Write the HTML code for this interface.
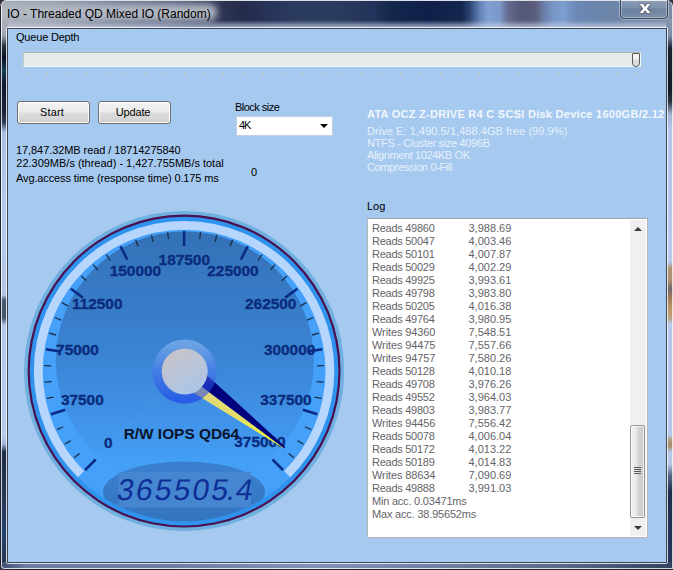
<!DOCTYPE html>
<html lang="en"><head><meta charset="utf-8"><title>IO - Threaded QD Mixed IO (Random)</title>
<style>
html,body{margin:0;padding:0}
body{width:673px;height:570px;overflow:hidden;position:relative;background:#3c343c;font-family:"Liberation Sans",sans-serif;font-size:11px;color:#000}
.abs{position:absolute}
#win{position:absolute;left:0;top:0;width:673px;height:570px;overflow:hidden;border-radius:7px 7px 0 5px;
 background:#6d7d99}
#tbar{position:absolute;left:0;top:0;width:673px;height:29px;
 background:linear-gradient(90deg,#a2a8b4 0px,#9aa2b0 40px,#868ea4 80px,#6a748f 120px,#566080 170px,#3e4868 200px,#2c3252 225px,#252b4b 245px,#27345a 270px,#2c3c60 300px,#2b3b5e 340px,#22325a 375px,#14264c 392px,#10204a 430px,#15274e 462px,#2e4674 470px,#6484b8 480px,#80a0d2 488px,#7c98c8 500px,#646c90 508px,#565878 520px,#5a5c7a 535px,#6c82ac 545px,#7896c6 553px,#7d9fd0 563px,#6c88b4 577px,#6a84aa 600px,#7489a8 640px,#7a8ca6 673px)}
#tglow{position:absolute;left:2px;top:10px;width:209px;height:5px;border-radius:4px;background:#b3b9c3;box-shadow:0 0 7px 6px #b3b9c3;opacity:.97}
#tshadeL{position:absolute;left:0;top:0;width:673px;height:29px;background:linear-gradient(180deg,rgba(200,207,224,0) 0,rgba(200,207,224,0) 21px,rgba(200,207,224,.35) 24px,rgba(200,207,224,.75) 27px);-webkit-mask-image:linear-gradient(90deg,#000 0,#000 150px,transparent 225px);mask-image:linear-gradient(90deg,#000 0,#000 150px,transparent 225px)}
#tshadeR{position:absolute;left:0;top:0;width:673px;height:29px;background:linear-gradient(180deg,rgba(195,206,228,0) 0,rgba(195,206,228,0) 20px,rgba(195,206,228,.25) 22.5px,rgba(195,206,228,.5) 24.5px,rgba(195,206,228,.7) 26.5px,rgba(195,206,228,.75) 27px);-webkit-mask-image:linear-gradient(90deg,transparent 0,transparent 150px,#000 225px);mask-image:linear-gradient(90deg,transparent 0,transparent 150px,#000 225px)}
#ttop{position:absolute;left:0;top:0;width:673px;height:1px;background:#d0d4dc}
#ttext{position:absolute;left:7px;top:7px;font-size:12px;line-height:14px;color:#000;white-space:pre;letter-spacing:-0.005px}
#fl{position:absolute;left:0;top:20px;width:8px;height:550px;
 background:linear-gradient(180deg,#a6adb9 0px,#a6adb9 10px,#9aa2b0 16px,#2a3040 26px,#0c1424 38px,#163e58 50px,#101a30 64px,#1a2438 92px,#2e3a52 102px,#a9bfe2 112px,#b4c9ea 180px,#b2c6e6 275px,#4a5870 280px,#47556d 298px,#b2c8ea 305px,#b6cbea 416px,#9fb4d8 424px,#1e2a46 432px,#2a3856 480px,#22416e 515px,#2a3654 540px)}
#fr{position:absolute;left:666px;top:19px;width:7px;height:551px;
 background:linear-gradient(180deg,#8796ae 0px,#7d8ca6 17px,#1a2133 29px,#10182a 71px,#2b3345 83px,#9fb2d2 95px,#b3c8ea 111px,#b5caec 243px,#b09478 249px,#b09070 261px,#706870 270px,#a07c58 279px,#c09a68 291px,#b8a080 299px,#b5c9ea 305px,#b4c9eb 416px,#b09a80 421px,#a58a6c 427px,#b4c8e8 433px,#b4c8e8 445px,#5a6a88 456px,#1f2d4c 473px,#24355a 541px)}
#fb{position:absolute;left:0;top:562px;width:673px;height:8px;background:linear-gradient(90deg,#3a4a6a 0,#6a7ca0 25px,#6c7c9e 160px,#8292b4 310px,#7383a5 420px,#5a6a8a 560px,#34425f 673px)}
.edge{position:absolute;box-sizing:border-box}
#client{position:absolute;left:8px;top:29px;width:658px;height:533px;background:#a6c9ef;overflow:hidden}
#gauge{position:absolute;left:0;top:0}
.lbl{position:absolute;white-space:pre;line-height:13px}
.btn{position:absolute;box-sizing:border-box;width:73px;height:23px;border:1px solid #707070;border-radius:3px;
 background:linear-gradient(180deg,#f2f2f2 0,#ebebeb 48%,#dddddd 52%,#cfcfcf 100%);box-shadow:inset 0 0 0 1px rgba(255,255,255,.85);
 text-align:center;line-height:20px;font-size:11px;color:#000;padding-right:3px}
#combo{position:absolute;left:236px;top:116px;width:97px;height:20px;box-sizing:border-box;background:#fff;border:1px solid #c3cfe2}
#list{position:absolute;left:367px;top:218px;width:281px;height:320px;box-sizing:border-box;background:#fff;border:1px solid #b9b4ae;border-top-color:#a2a4a8;border-left-color:#b4b6ba}
.lr{position:absolute;left:4px;height:13px;line-height:13px;white-space:pre;color:#646468}
.c1{position:absolute;left:0;letter-spacing:-0.268px}
.c2{position:absolute;left:96.5px;letter-spacing:-0.004px}
#sb{position:absolute;left:630px;top:220px;width:16px;height:316px;background:#f0f0f0}
#thumb{position:absolute;left:630px;top:425px;width:15px;height:93px;box-sizing:border-box;border:1px solid #979797;border-radius:2px;
 background:linear-gradient(90deg,#f3f3f3 0,#e6e6e6 45%,#d4d4d4 55%,#c9c9c9 100%);box-shadow:inset 0 0 0 1px rgba(255,255,255,.7)}
.grip{position:absolute;left:634px;width:7px;height:1px;background:#5a5a5a}
.tri{position:absolute;width:0;height:0;border-left:4px solid transparent;border-right:4px solid transparent}
.gl{font-family:"Liberation Sans",sans-serif;font-weight:bold;font-size:15.4px;fill:#0a2c7c;stroke:#0a2c7c;stroke-width:.35px}
.gt{font-family:"Liberation Sans",sans-serif;font-weight:bold;font-size:15.4px;fill:#08142c}
.dg{font-family:"Liberation Sans",sans-serif;font-size:30px;fill:#0d2f96}
.info{color:#e6f0fb}
</style></head><body>
<div id="win">
 <div id="tbar"></div><div id="tglow"></div><div id="tshadeL"></div><div id="tshadeR"></div><div id="ttop"></div>
 <div id="fl"></div><div id="fr"></div><div id="fb"></div>
 <!-- outer highlights -->
 <div class="edge" style="left:0;top:0;width:673px;height:570px;border:1px solid #1d2230;border-top-color:transparent;border-right:none;border-radius:7px 7px 0 5px"></div>
 <div class="edge" style="left:1px;top:0px;width:672px;height:569px;border:1px solid rgba(255,255,255,.78);border-top-color:rgba(255,255,255,.25);border-radius:6px 6px 0 4px"></div>
 <!-- close button -->
 <div class="edge" style="left:620px;top:-1px;width:48px;height:20px;border:1px solid #3f4a5c;border-radius:0 0 4px 4px;background:linear-gradient(180deg,rgba(255,255,255,.18),rgba(255,255,255,.05) 45%,rgba(0,0,0,.06) 50%,rgba(255,255,255,.06));box-shadow:0 0 0 1px rgba(255,255,255,.35),inset 0 0 0 1px rgba(255,255,255,.3)"></div>
 <div class="abs" style="left:636.5px;top:-1.8px;width:16px;height:20px;text-align:center;font-family:'DejaVu Sans','Liberation Sans',sans-serif;font-weight:bold;font-size:15px;line-height:20px;color:#fff;text-shadow:0 0 1px #333,0 0 2px #444;transform:scaleX(1.2)">x</div>
 <div id="ttext">IO - Threaded QD Mixed IO (Random)</div>
 <!-- inner frame lines -->
 <div class="edge" style="left:6px;top:27px;width:662px;height:537px;border:1px solid rgba(255,255,255,.8);border-radius:2px"></div>
 <div class="edge" style="left:7px;top:28px;width:660px;height:535px;border:1px solid #3c4456"></div>
 <div id="client"></div>
</div>
<svg id="gauge" width="673" height="570" viewBox="0 0 673 570">
<defs>
<linearGradient id="lens" x1="0" y1="0" x2="0" y2="1">
 <stop offset="0" stop-color="#3471b6"/><stop offset="0.45" stop-color="#3a82d2"/><stop offset="0.72" stop-color="#4092e8"/><stop offset="0.9" stop-color="#449ff6"/><stop offset="1" stop-color="#44a0f8"/>
</linearGradient>
<linearGradient id="ring" x1="0" y1="0" x2="0" y2="1">
 <stop offset="0" stop-color="#94bef4"/><stop offset="0.5" stop-color="#4a74ec"/><stop offset="1" stop-color="#1636e8"/>
</linearGradient>
<linearGradient id="hub" x1="0.2" y1="0" x2="0.8" y2="1">
 <stop offset="0" stop-color="#c9c4c7"/><stop offset="1" stop-color="#a9c5ea"/>
</linearGradient>
<linearGradient id="yel" gradientUnits="userSpaceOnUse" x1="184.5" y1="371.5" x2="285" y2="448.6">
 <stop offset="0" stop-color="#dcd484"/><stop offset="0.55" stop-color="#e6de66"/><stop offset="1" stop-color="#ffff20"/>
</linearGradient>
<linearGradient id="ell" x1="0" y1="0" x2="0" y2="1">
 <stop offset="0" stop-color="#3b80d0"/><stop offset="1" stop-color="#3374be"/>
</linearGradient>
<clipPath id="face"><circle cx="184.1" cy="371.1" r="150.2"/></clipPath>
</defs>
<circle cx="184.1" cy="371.1" r="160.1" fill="#6fb0e0"/>
<circle cx="184.1" cy="371.1" r="156.5" fill="#4a0f4e"/>
<circle cx="184.1" cy="371.1" r="154.3" fill="#2f92ec"/>
<circle cx="184.1" cy="371.1" r="150.2" fill="#44a0f8"/>
<path d="M81.00,474.20 A145.8,145.8 0 1 1 287.20,474.20" fill="none" stroke="#b6d6fe" stroke-width="8.8"/>
<circle cx="184.8" cy="360.5" r="129" fill="url(#lens)"/>
<g clip-path="url(#face)"><ellipse cx="184" cy="492" rx="81" ry="30.5" fill="url(#ell)"/></g>
<rect x="118.5" y="472" width="132.5" height="35.5" fill="#4686d0"/>
<line x1="184.1" y1="371.1" x2="97.83" y2="457.37" stroke="#8fc4ff" stroke-opacity="0.14" stroke-width="1"/>
<line x1="95.71" y1="459.49" x2="85.11" y2="470.09" stroke="#0b2a86" stroke-width="2.6"/>
<line x1="79.65" y1="453.44" x2="74.16" y2="457.77" stroke="#1b2f48" stroke-width="1.3"/>
<line x1="70.70" y1="440.59" x2="64.73" y2="444.25" stroke="#1b2f48" stroke-width="1.3"/>
<line x1="63.32" y1="426.78" x2="56.96" y2="429.71" stroke="#1b2f48" stroke-width="1.3"/>
<line x1="65.22" y1="409.73" x2="50.95" y2="414.36" stroke="#0b2a86" stroke-width="2.6"/>
<line x1="53.66" y1="397.05" x2="46.79" y2="398.41" stroke="#1b2f48" stroke-width="1.3"/>
<line x1="51.51" y1="381.54" x2="44.53" y2="382.08" stroke="#1b2f48" stroke-width="1.3"/>
<line x1="51.20" y1="365.88" x2="44.21" y2="365.60" stroke="#1b2f48" stroke-width="1.3"/>
<line x1="60.64" y1="351.55" x2="45.82" y2="349.20" stroke="#0b2a86" stroke-width="2.6"/>
<line x1="56.09" y1="335.00" x2="49.36" y2="333.10" stroke="#1b2f48" stroke-width="1.3"/>
<line x1="61.22" y1="320.20" x2="54.76" y2="317.52" stroke="#1b2f48" stroke-width="1.3"/>
<line x1="68.06" y1="306.11" x2="61.95" y2="302.69" stroke="#1b2f48" stroke-width="1.3"/>
<line x1="82.97" y1="297.63" x2="70.84" y2="288.81" stroke="#0b2a86" stroke-width="2.6"/>
<line x1="86.44" y1="280.82" x2="81.29" y2="276.07" stroke="#1b2f48" stroke-width="1.3"/>
<line x1="97.72" y1="269.97" x2="93.18" y2="264.64" stroke="#1b2f48" stroke-width="1.3"/>
<line x1="110.21" y1="260.51" x2="106.32" y2="254.69" stroke="#1b2f48" stroke-width="1.3"/>
<line x1="127.35" y1="259.72" x2="120.54" y2="246.36" stroke="#0b2a86" stroke-width="2.6"/>
<line x1="138.07" y1="246.32" x2="135.64" y2="239.75" stroke="#1b2f48" stroke-width="1.3"/>
<line x1="153.05" y1="241.77" x2="151.42" y2="234.97" stroke="#1b2f48" stroke-width="1.3"/>
<line x1="168.47" y1="239.02" x2="167.64" y2="232.07" stroke="#1b2f48" stroke-width="1.3"/>
<line x1="184.10" y1="246.10" x2="184.10" y2="231.10" stroke="#0b2a86" stroke-width="2.6"/>
<line x1="199.73" y1="239.02" x2="200.56" y2="232.07" stroke="#1b2f48" stroke-width="1.3"/>
<line x1="215.15" y1="241.77" x2="216.78" y2="234.97" stroke="#1b2f48" stroke-width="1.3"/>
<line x1="230.13" y1="246.32" x2="232.56" y2="239.75" stroke="#1b2f48" stroke-width="1.3"/>
<line x1="240.85" y1="259.72" x2="247.66" y2="246.36" stroke="#0b2a86" stroke-width="2.6"/>
<line x1="257.99" y1="260.51" x2="261.88" y2="254.69" stroke="#1b2f48" stroke-width="1.3"/>
<line x1="270.48" y1="269.97" x2="275.02" y2="264.64" stroke="#1b2f48" stroke-width="1.3"/>
<line x1="281.76" y1="280.82" x2="286.91" y2="276.07" stroke="#1b2f48" stroke-width="1.3"/>
<line x1="285.23" y1="297.63" x2="297.36" y2="288.81" stroke="#0b2a86" stroke-width="2.6"/>
<line x1="300.14" y1="306.11" x2="306.25" y2="302.69" stroke="#1b2f48" stroke-width="1.3"/>
<line x1="306.98" y1="320.20" x2="313.44" y2="317.52" stroke="#1b2f48" stroke-width="1.3"/>
<line x1="312.11" y1="335.00" x2="318.84" y2="333.10" stroke="#1b2f48" stroke-width="1.3"/>
<line x1="307.56" y1="351.55" x2="322.38" y2="349.20" stroke="#0b2a86" stroke-width="2.6"/>
<line x1="317.00" y1="365.88" x2="323.99" y2="365.60" stroke="#1b2f48" stroke-width="1.3"/>
<line x1="316.69" y1="381.54" x2="323.67" y2="382.08" stroke="#1b2f48" stroke-width="1.3"/>
<line x1="314.54" y1="397.05" x2="321.41" y2="398.41" stroke="#1b2f48" stroke-width="1.3"/>
<line x1="302.98" y1="409.73" x2="317.25" y2="414.36" stroke="#0b2a86" stroke-width="2.6"/>
<line x1="304.88" y1="426.78" x2="311.24" y2="429.71" stroke="#1b2f48" stroke-width="1.3"/>
<line x1="297.50" y1="440.59" x2="303.47" y2="444.25" stroke="#1b2f48" stroke-width="1.3"/>
<line x1="288.55" y1="453.44" x2="294.04" y2="457.77" stroke="#1b2f48" stroke-width="1.3"/>
<line x1="272.49" y1="459.49" x2="283.09" y2="470.09" stroke="#0b2a86" stroke-width="2.6"/>
<text x="108.4" y="447.5" text-anchor="middle" class="gl">0</text>
<text x="82.3" y="405.4" text-anchor="middle" class="gl">37500</text>
<text x="77.5" y="355.2" text-anchor="middle" class="gl">75000</text>
<text x="97.2" y="308.7" text-anchor="middle" class="gl">112500</text>
<text x="135.4" y="276.2" text-anchor="middle" class="gl">150000</text>
<text x="184.3" y="264.6" text-anchor="middle" class="gl">187500</text>
<text x="233.0" y="276.2" text-anchor="middle" class="gl">225000</text>
<text x="270.7" y="309.3" text-anchor="middle" class="gl">262500</text>
<text x="289.6" y="355.4" text-anchor="middle" class="gl">300000</text>
<text x="286.0" y="405.4" text-anchor="middle" class="gl">337500</text>
<text x="260.0" y="447.4" text-anchor="middle" class="gl">375000</text>
<text x="181.4" y="439.4" text-anchor="middle" class="gt">R/W IOPS QD64</text>
<polygon points="190,359.8 284.9,446.5 284.6,448.8 186,375.1" fill="#00007c"/>
<polygon points="186,375.1 284.6,448.8 283,448 180,384.4" fill="url(#yel)"/>
<circle cx="184.6" cy="371.6" r="27.5" fill="none" stroke="url(#ring)" stroke-width="9.2" stroke-opacity="0.55"/>
<circle cx="184.7" cy="371.4" r="23" fill="url(#hub)"/>
<text transform="translate(115.8,499.5) skewX(-10) scale(1.0,1)" x="0.00 18.80 37.60 56.40 75.30 94.10 109.70 118.60" y="0" class="dg">365505.4</text>
</svg>
<!-- labels -->
<div class="lbl" style="left:16px;top:31px;letter-spacing:-0.195px">Queue Depth</div>
<div class="abs" style="left:23px;top:52px;width:618px;height:15px;box-sizing:border-box;background:#e7eaea;border:1px solid #f3f5f6;border-top-color:#b4b6b6;border-left-color:#c9cbcb"></div>
<div class="abs" style="left:27px;top:72px;width:1px;height:3px;background:#c2c4c0"></div><div class="abs" style="left:47px;top:72px;width:1px;height:3px;background:#c2c4c0"></div><div class="abs" style="left:66px;top:72px;width:1px;height:3px;background:#c2c4c0"></div><div class="abs" style="left:86px;top:72px;width:1px;height:3px;background:#c2c4c0"></div><div class="abs" style="left:106px;top:72px;width:1px;height:3px;background:#c2c4c0"></div><div class="abs" style="left:125px;top:72px;width:1px;height:3px;background:#c2c4c0"></div><div class="abs" style="left:145px;top:72px;width:1px;height:3px;background:#c2c4c0"></div><div class="abs" style="left:165px;top:72px;width:1px;height:3px;background:#c2c4c0"></div><div class="abs" style="left:184px;top:72px;width:1px;height:3px;background:#c2c4c0"></div><div class="abs" style="left:204px;top:72px;width:1px;height:3px;background:#c2c4c0"></div><div class="abs" style="left:223px;top:72px;width:1px;height:3px;background:#c2c4c0"></div><div class="abs" style="left:243px;top:72px;width:1px;height:3px;background:#c2c4c0"></div><div class="abs" style="left:263px;top:72px;width:1px;height:3px;background:#c2c4c0"></div><div class="abs" style="left:282px;top:72px;width:1px;height:3px;background:#c2c4c0"></div><div class="abs" style="left:302px;top:72px;width:1px;height:3px;background:#c2c4c0"></div><div class="abs" style="left:322px;top:72px;width:1px;height:3px;background:#c2c4c0"></div><div class="abs" style="left:341px;top:72px;width:1px;height:3px;background:#c2c4c0"></div><div class="abs" style="left:361px;top:72px;width:1px;height:3px;background:#c2c4c0"></div><div class="abs" style="left:381px;top:72px;width:1px;height:3px;background:#c2c4c0"></div><div class="abs" style="left:400px;top:72px;width:1px;height:3px;background:#c2c4c0"></div><div class="abs" style="left:420px;top:72px;width:1px;height:3px;background:#c2c4c0"></div><div class="abs" style="left:440px;top:72px;width:1px;height:3px;background:#c2c4c0"></div><div class="abs" style="left:459px;top:72px;width:1px;height:3px;background:#c2c4c0"></div><div class="abs" style="left:479px;top:72px;width:1px;height:3px;background:#c2c4c0"></div><div class="abs" style="left:499px;top:72px;width:1px;height:3px;background:#c2c4c0"></div><div class="abs" style="left:518px;top:72px;width:1px;height:3px;background:#c2c4c0"></div><div class="abs" style="left:538px;top:72px;width:1px;height:3px;background:#c2c4c0"></div><div class="abs" style="left:558px;top:72px;width:1px;height:3px;background:#c2c4c0"></div><div class="abs" style="left:577px;top:72px;width:1px;height:3px;background:#c2c4c0"></div><div class="abs" style="left:597px;top:72px;width:1px;height:3px;background:#c2c4c0"></div><div class="abs" style="left:617px;top:72px;width:1px;height:3px;background:#c2c4c0"></div><div class="abs" style="left:636px;top:72px;width:1px;height:3px;background:#c2c4c0"></div>
<div class="abs" style="left:632px;top:53px;width:8px;height:14px;box-sizing:border-box;border:1px solid #5a5a5a;border-radius:1px 1px 4px 4px;background:linear-gradient(180deg,#f6f6f6 0,#ededed 50%,#d6d6d6 55%,#e4e4e4 100%)"></div>
<div class="btn" style="left:17px;top:101px"><span style="letter-spacing:0.194px">Start</span></div>
<div class="btn" style="left:98px;top:101px"><span style="letter-spacing:-0.147px">Update</span></div>
<div class="lbl" style="left:235px;top:101px;letter-spacing:-0.523px">Block size</div>
<div id="combo"><span class="abs" style="left:2px;top:2px;line-height:13px;letter-spacing:-1.035px">4K</span></div>
<div class="tri" style="left:320px;top:124px;border-top:4px solid #000"></div>
<div class="lbl" style="left:16px;top:144px;letter-spacing:-0.079px">17,847.32MB read / 18714275840</div>
<div class="lbl" style="left:16.3px;top:157px;letter-spacing:-0.012px">22.309MB/s (thread) - 1,427.755MB/s total</div>
<div class="lbl" style="left:16px;top:172px;letter-spacing:-0.124px">Avg.access time (response time) 0.175 ms</div>
<div class="lbl" style="left:251px;top:166px">0</div>
<div class="lbl info" style="left:367px;top:108px;font-weight:bold;color:#f2f7fd;letter-spacing:0.274px">ATA OCZ Z-DRIVE R4 C SCSI Disk Device 1600GB/2.12</div>
<div class="lbl info" style="left:367px;top:125px;letter-spacing:0.056px">Drive E: 1,490.5/1,488.4GB free (99.9%)</div>
<div class="lbl info" style="left:367px;top:137px;letter-spacing:-0.325px">NTFS - Cluster size 4096B</div>
<div class="lbl info" style="left:367px;top:149px;letter-spacing:-0.388px">Alignment 1024KB OK</div>
<div class="lbl info" style="left:367px;top:161px;letter-spacing:-0.372px">Compression 0-Fill</div>
<div class="lbl" style="left:367px;top:200px">Log</div>
<div id="list">
<div class="lr" style="top:3px"><span class="c1" style="letter-spacing:-0.268px">Reads 49860</span><span class="c2">3,988.69</span></div>
<div class="lr" style="top:16px"><span class="c1" style="letter-spacing:-0.268px">Reads 50047</span><span class="c2">4,003.46</span></div>
<div class="lr" style="top:29px"><span class="c1" style="letter-spacing:-0.268px">Reads 50101</span><span class="c2">4,007.87</span></div>
<div class="lr" style="top:42px"><span class="c1" style="letter-spacing:-0.268px">Reads 50029</span><span class="c2">4,002.29</span></div>
<div class="lr" style="top:55px"><span class="c1" style="letter-spacing:-0.268px">Reads 49925</span><span class="c2">3,993.61</span></div>
<div class="lr" style="top:68px"><span class="c1" style="letter-spacing:-0.268px">Reads 49798</span><span class="c2">3,983.80</span></div>
<div class="lr" style="top:81px"><span class="c1" style="letter-spacing:-0.268px">Reads 50205</span><span class="c2">4,016.38</span></div>
<div class="lr" style="top:94px"><span class="c1" style="letter-spacing:-0.268px">Reads 49764</span><span class="c2">3,980.95</span></div>
<div class="lr" style="top:107px"><span class="c1" style="letter-spacing:-0.11px">Writes 94360</span><span class="c2">7,548.51</span></div>
<div class="lr" style="top:120px"><span class="c1" style="letter-spacing:-0.11px">Writes 94475</span><span class="c2">7,557.66</span></div>
<div class="lr" style="top:133px"><span class="c1" style="letter-spacing:-0.11px">Writes 94757</span><span class="c2">7,580.26</span></div>
<div class="lr" style="top:146px"><span class="c1" style="letter-spacing:-0.268px">Reads 50128</span><span class="c2">4,010.18</span></div>
<div class="lr" style="top:159px"><span class="c1" style="letter-spacing:-0.268px">Reads 49708</span><span class="c2">3,976.26</span></div>
<div class="lr" style="top:172px"><span class="c1" style="letter-spacing:-0.268px">Reads 49552</span><span class="c2">3,964.03</span></div>
<div class="lr" style="top:185px"><span class="c1" style="letter-spacing:-0.268px">Reads 49803</span><span class="c2">3,983.77</span></div>
<div class="lr" style="top:198px"><span class="c1" style="letter-spacing:-0.11px">Writes 94456</span><span class="c2">7,556.42</span></div>
<div class="lr" style="top:211px"><span class="c1" style="letter-spacing:-0.268px">Reads 50078</span><span class="c2">4,006.04</span></div>
<div class="lr" style="top:224px"><span class="c1" style="letter-spacing:-0.268px">Reads 50172</span><span class="c2">4,013.22</span></div>
<div class="lr" style="top:237px"><span class="c1" style="letter-spacing:-0.268px">Reads 50189</span><span class="c2">4,014.83</span></div>
<div class="lr" style="top:250px"><span class="c1" style="letter-spacing:-0.11px">Writes 88634</span><span class="c2">7,090.69</span></div>
<div class="lr" style="top:263px"><span class="c1" style="letter-spacing:-0.268px">Reads 49888</span><span class="c2">3,991.03</span></div>
<div class="lr" style="top:276px"><span class="c1" style="letter-spacing:-0.213px">Min acc. 0.03471ms</span></div>
<div class="lr" style="top:289px"><span class="c1" style="letter-spacing:-0.185px">Max acc. 38.95652ms</span></div>
</div>
<div id="sb"></div>
<div id="thumb"></div>
<div class="grip" style="top:467px"></div><div class="grip" style="top:469px"></div><div class="grip" style="top:471px"></div><div class="grip" style="top:473px"></div>
<div class="tri" style="left:634px;top:227px;border-bottom:4px solid #3a3a3a"></div>
<div class="tri" style="left:634px;top:526px;border-top:4px solid #3a3a3a"></div>
</body></html>
